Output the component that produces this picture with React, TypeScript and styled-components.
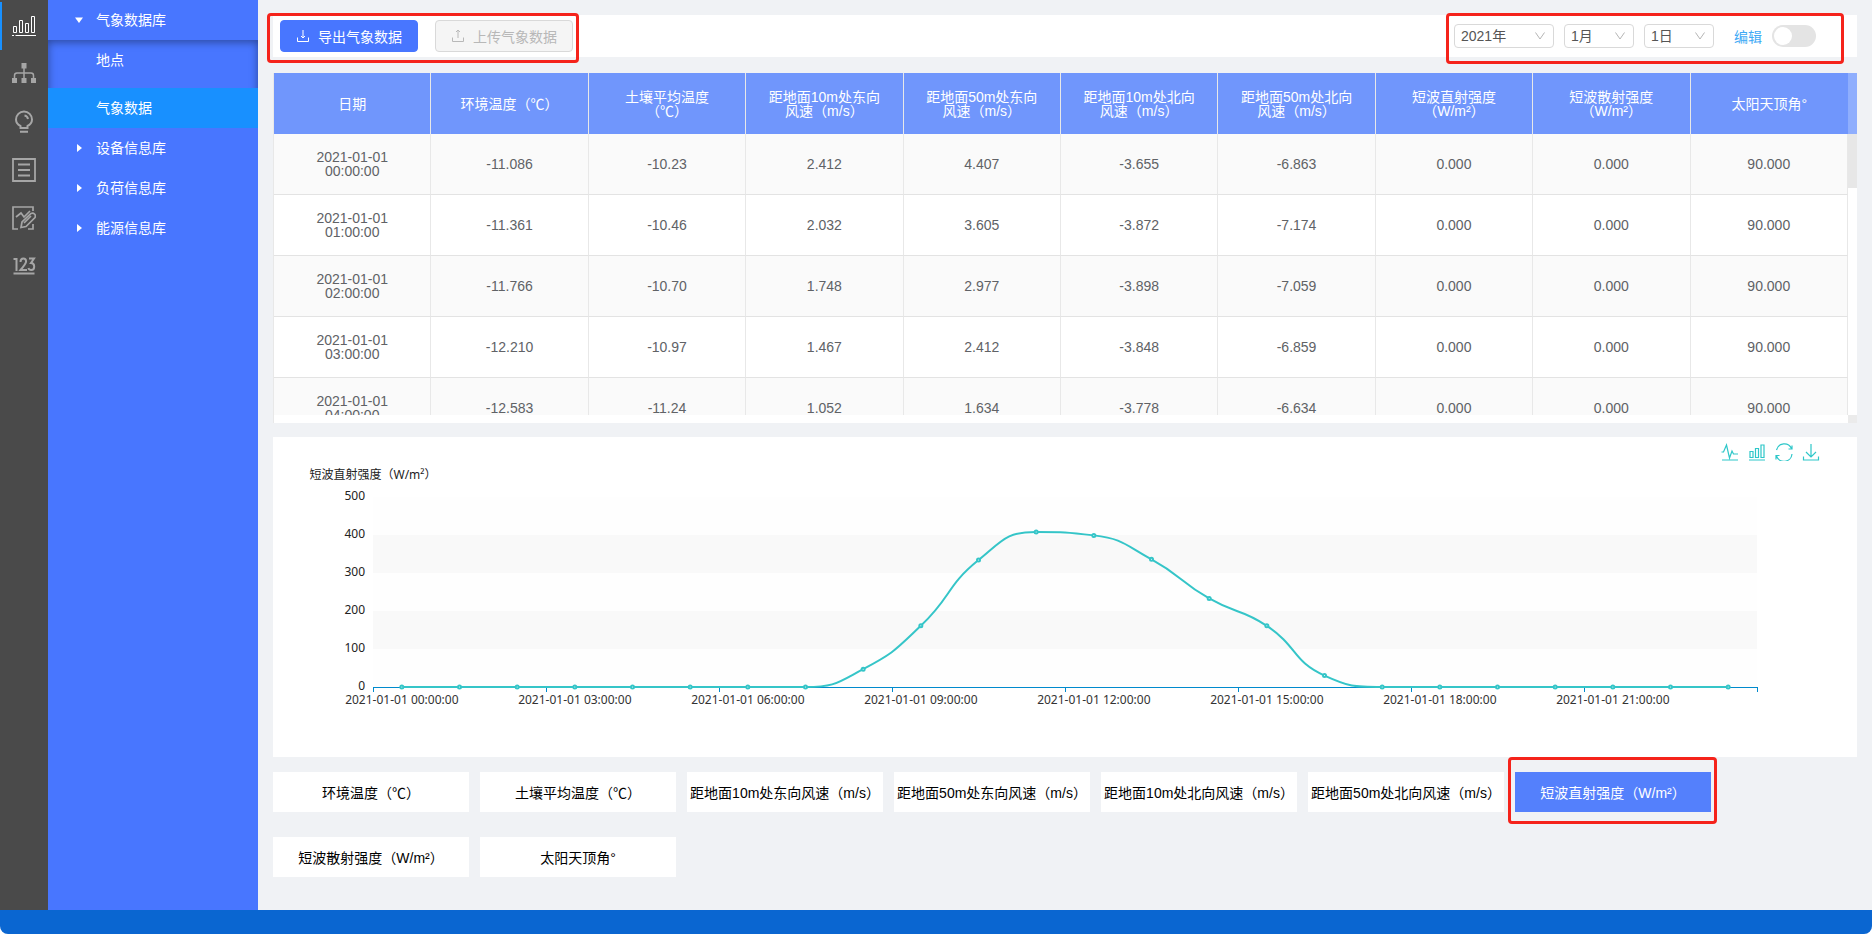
import React, { useLayoutEffect, useRef, useState } from 'react';
import styled, { createGlobalStyle, css } from 'styled-components';

const uiFont = '"Liberation Sans", "Noto Sans CJK SC", sans-serif';
const chartFont = '"Noto Sans", "Noto Sans CJK SC", sans-serif';

const GlobalStyle = createGlobalStyle`
  * { box-sizing: border-box; }
  body { margin: 0; background: #fff; font-family: ${uiFont}; font-size: 14px; }
  button, select, input { font: inherit; }
`;

const Page = styled.div`
  min-height: 100vh;
  display: flex;
  flex-direction: column;
  background: #f0f2f5;
  border-radius: 0 0 8px 8px;
  overflow: hidden;
`;
const Columns = styled.div`
  flex: 1;
  display: flex;
  align-items: stretch;
`;
const Footer = styled.footer`
  height: 24px;
  background: #0a66d1;
`;

const Rail = styled.nav`
  width: 48px;
  flex: none;
  display: flex;
  flex-direction: column;
  background: #4a4a4a;
  padding-top: 2px;
`;
const RailButton = styled.button<{ $active?: boolean }>`
  height: 48px;
  padding: 0 2px 0 0;
  border: 0;
  border-left: 2px solid ${(p) => (p.$active ? '#1890ff' : 'transparent')};
  background: none;
  color: ${(p) => (p.$active ? '#fff' : '#a6a6a6')};
  display: flex;
  align-items: center;
  justify-content: center;
`;

const Sidebar = styled.nav`
  width: 210px;
  flex: none;
  background: #4876ff;
  color: #fff;
`;
const MenuGroup = styled.button`
  width: 100%;
  height: 40px;
  border: 0;
  padding: 0 0 0 27px;
  background: none;
  color: #fff;
  display: flex;
  align-items: center;
  gap: 13px;
  line-height: 20px;
`;
const Submenu = styled.div`
  display: flex;
  flex-direction: column;
  gap: 8px;
  box-shadow: inset 0 2px 8px rgba(0, 0, 0, 0.4);
`;
const MenuLink = styled.a<{ $active?: boolean }>`
  height: 40px;
  padding-left: 48px;
  line-height: 40px;
  color: #fff;
  text-decoration: none;
  background: ${(p) => (p.$active ? '#1890ff' : 'none')};
`;

const Main = styled.main`
  flex: 1;
  min-width: 0;
  padding: 15px;
  display: flex;
  flex-direction: column;
`;
const Panel = styled.section`
  background: #fff;
`;
const Toolbar = styled(Panel)`
  height: 42px;
  margin-bottom: 16px;
  padding: 0 41px 0 7px;
  display: flex;
  align-items: center;
  justify-content: space-between;
`;
const marker = css<{ $mark: string }>`
  position: relative;
  &::after {
    content: '';
    position: absolute;
    inset: ${(p) => p.$mark};
    border: 3px solid #f5231b;
    border-radius: 4px;
    pointer-events: none;
  }
`;
const ActionGroup = styled.div<{ $mark: string }>`
  ${marker}
  display: flex;
  gap: 17px;
`;
const FilterGroup = styled.div<{ $mark: string }>`
  ${marker}
  display: flex;
  align-items: center;
  gap: 10px;
`;
const ActionButton = styled.button`
  height: 32px;
  padding: 0 15px;
  border: 1px solid #4876ff;
  border-radius: 4px;
  background: #4876ff;
  color: #fff;
  display: flex;
  align-items: center;
  gap: 8px;
  white-space: nowrap;
  &:disabled {
    border-color: #d9d9d9;
    background: #f5f5f5;
    color: #b8b8b8;
  }
`;
const SelectBox = styled.div<{ $width: number }>`
  width: ${(p) => p.$width}px;
  height: 24px;
  display: grid;
  align-items: center;
  color: #b5b5b5;
  > * { grid-area: 1 / 1; }
  > svg { justify-self: end; margin-right: 9px; pointer-events: none; }
`;
const Select = styled.select`
  appearance: none;
  width: 100%;
  height: 24px;
  padding: 0 24px 0 6px;
  border: 1px solid #d9d9d9;
  border-radius: 4px;
  background: #fff;
  color: #555;
  line-height: 20px;
`;
const SwitchLabel = styled.label`
  margin-left: 10px;
  color: #40a9f5;
`;
const Switch = styled.input`
  appearance: none;
  width: 44px;
  height: 22px;
  margin: 0;
  padding: 2px;
  border-radius: 11px;
  background: #e4e4e4;
  display: flex;
  &::before {
    content: '';
    width: 18px;
    height: 18px;
    border-radius: 50%;
    background: #fff;
  }
  &:checked { background: #1890ff; justify-content: flex-end; }
`;

const TablePanel = styled(Panel)`
  margin-bottom: 14px;
  border-left: 1px solid #e8e8e8;
  display: grid;
  grid-template-columns: 1fr 9px;
`;
const TableScroll = styled.div`
  height: 342px;
  overflow-y: auto;
  scrollbar-width: none;
`;
const Table = styled.table`
  width: 100%;
  table-layout: fixed;
  border-collapse: separate;
  border-spacing: 0;
  line-height: 14px;
  text-align: center;
`;
const HeadCell = styled.th`
  position: sticky;
  top: 0;
  height: 61px;
  padding: 0 8px;
  border-right: 1px solid #e8e8e8;
  background: #7096fc;
  color: #fff;
  font-weight: 400;
  white-space: nowrap;
  &:last-child { border-right: 0; }
`;
const BodyRow = styled.tr`
  &:nth-child(odd) { background: #fafafa; }
`;
const Cell = styled.td`
  height: 61px;
  padding: 0 40px;
  border-right: 1px solid #e8e8e8;
  border-bottom: 1px solid #e3e3e3;
  color: #606266;
`;
const Gutter = styled.div`
  height: 350px;
  display: flex;
  flex-direction: column;
  background: linear-gradient(#8faefd 61px, #e7e7e7 61px, #e7e7e7 115px, #fff 115px);
  &::after { content: ''; height: 8px; margin-top: auto; background: #ebebeb; }
`;

const ChartPanel = styled(Panel)`
  height: 320px;
  margin-bottom: 15px;
  display: grid;
  > * { grid-area: 1 / 1; }
`;
const ChartBox = styled.div`
  min-width: 0;
  height: 320px;
  overflow: hidden;
  svg { display: block; font-family: ${chartFont}; font-size: 12px; }
`;
const Toolbox = styled.div`
  justify-self: end;
  align-self: start;
  padding: 6px 37px 0 0;
  display: flex;
  gap: 9px;
  z-index: 1;
`;
const ToolButton = styled.button`
  width: 18px;
  height: 18px;
  padding: 0;
  border: 0;
  background: none;
  color: #2ec7c9;
`;

const Metrics = styled.div`
  display: flex;
  flex-wrap: wrap;
  gap: 25px 11px;
`;
const metricBase = css`
  width: 196px;
  height: 40px;
  padding: 0;
  border: 0;
  white-space: nowrap;
`;
const MetricButton = styled.button`
  ${metricBase}
  background: #fff;
  color: #000;
`;
const ActiveMetric = styled.button<{ $mark: string }>`
  ${metricBase}
  ${marker}
  background: #5480fc;
  color: #fff;
`;

const headers: string[][] = [
  ['日期'],
  ['环境温度（℃）'],
  ['土壤平均温度', '（℃）'],
  ['距地面10m处东向', '风速（m/s）'],
  ['距地面50m处东向', '风速（m/s）'],
  ['距地面10m处北向', '风速（m/s）'],
  ['距地面50m处北向', '风速（m/s）'],
  ['短波直射强度', '（W/m²）'],
  ['短波散射强度', '（W/m²）'],
  ['太阳天顶角°'],
];
const rows = [
  ['2021-01-01 00:00:00', '-11.086', '-10.23', '2.412', '4.407', '-3.655', '-6.863', '0.000', '0.000', '90.000'],
  ['2021-01-01 01:00:00', '-11.361', '-10.46', '2.032', '3.605', '-3.872', '-7.174', '0.000', '0.000', '90.000'],
  ['2021-01-01 02:00:00', '-11.766', '-10.70', '1.748', '2.977', '-3.898', '-7.059', '0.000', '0.000', '90.000'],
  ['2021-01-01 03:00:00', '-12.210', '-10.97', '1.467', '2.412', '-3.848', '-6.859', '0.000', '0.000', '90.000'],
  ['2021-01-01 04:00:00', '-12.583', '-11.24', '1.052', '1.634', '-3.778', '-6.634', '0.000', '0.000', '90.000'],
];
const metrics = [
  '环境温度（℃）',
  '土壤平均温度（℃）',
  '距地面10m处东向风速（m/s）',
  '距地面50m处东向风速（m/s）',
  '距地面10m处北向风速（m/s）',
  '距地面50m处北向风速（m/s）',
  '短波直射强度（W/m²）',
  '短波散射强度（W/m²）',
  '太阳天顶角°',
];
const activeMetric = '短波直射强度（W/m²）';
const radiation = [0, 0, 0, 0, 0, 0, 0, 0, 47, 161, 334, 408, 399, 336, 233, 161, 30, 0, 0, 0, 0, 0, 0, 0];

type Point = [number, number];
const clamp = (v: number, a: number, b: number) => Math.max(Math.min(a, b), Math.min(Math.max(a, b), v));

/* Smooth curve whose control points never leave the range of their segment. */
function smoothPath(pts: Point[]): string {
  let d = `M${pts[0][0]},${pts[0][1]}`;
  let out: Point = pts[0];
  for (let i = 1; i < pts.length; i++) {
    const p = pts[i];
    const prev = pts[i - 1];
    const next = pts[i + 1];
    let cin: Point = p;
    let cout: Point = p;
    if (next) {
      const lp = Math.hypot(p[0] - prev[0], p[1] - prev[1]);
      const ln = Math.hypot(next[0] - p[0], next[1] - p[1]);
      const r = ln / (ln + lp);
      const v: Point = [next[0] - prev[0], next[1] - prev[1]];
      cout = [0, 1].map((k) => clamp(p[k] + v[k] * 0.5 * r, p[k], next[k])) as Point;
      cin = [0, 1].map((k) => clamp(p[k] - ((cout[k] - p[k]) * lp) / ln, prev[k], p[k])) as Point;
      cout = [0, 1].map((k) => p[k] + ((p[k] - cin[k]) * ln) / lp) as Point;
    }
    d += `C${out[0]},${out[1]} ${cin[0]},${cin[1]} ${p[0]},${p[1]}`;
    out = cout;
  }
  return d;
}

function RadiationChart() {
  const box = useRef<HTMLDivElement>(null);
  const [width, setWidth] = useState(0);
  useLayoutEffect(() => {
    const el = box.current!;
    const update = () => setWidth(el.clientWidth);
    update();
    const observer = new ResizeObserver(update);
    observer.observe(el);
    return () => observer.disconnect();
  }, []);

  const left = 100;
  const top = 60;
  const band = 38;
  const base = top + band * 5;
  const plot = Math.max(width - 200, 240);
  const step = plot / 24;
  const pts = radiation.map((v, i): Point => [left + step * (i + 0.5), base - (v * band) / 100]);
  const marks = [0, 1, 2, 3, 4, 5, 6, 7];

  return (
    <ChartBox ref={box}>
      <svg width={width} height={320} role="img" aria-label={activeMetric}>
        {[0, 1, 2, 3, 4].map((i) => (
          <rect key={i} x={left} y={top + band * i} width={plot} height={band} fill={i % 2 ? '#f9f9f9' : '#fefefe'} />
        ))}
        <text x={left} y={42} textAnchor="middle" fill="#222">{activeMetric}</text>
        {[0, 100, 200, 300, 400, 500].map((v) => (
          <text key={v} x={left - 8} y={base - (v * band) / 100 + 3} textAnchor="end" fill="#222">{v}</text>
        ))}
        <g stroke="#008acd" shapeRendering="crispEdges">
          <line x1={left} x2={left + plot} y1={base} y2={base} />
          {[...marks, 8].map((i) => (
            <line key={i} x1={left + step * 3 * i} x2={left + step * 3 * i} y1={base} y2={base + 5} />
          ))}
        </g>
        {marks.map((i) => (
          <text key={i} x={pts[i * 3][0]} y={base + 17} textAnchor="middle" fill="#333">
            {`2021-01-01 ${String(i * 3).padStart(2, '0')}:00:00`}
          </text>
        ))}
        <path d={smoothPath(pts)} fill="none" stroke="#35c5c8" strokeWidth={2} />
        {pts.map(([x, y], i) => (
          <circle key={i} cx={x} cy={y} r={1.5} fill="#fff" stroke="#35c5c8" strokeWidth={2} />
        ))}
      </svg>
    </ChartBox>
  );
}

const Icon = ({ size = 24, box = 24, width = 1.5, children }: { size?: number; box?: number; width?: number; children: React.ReactNode }) => (
  <svg width={size} height={size} viewBox={`0 0 ${box} ${box}`} fill="none" stroke="currentColor" strokeWidth={width} aria-hidden="true">
    {children}
  </svg>
);

const Caret = ({ open }: { open?: boolean }) => (
  <svg width="8" height="8" viewBox="0 0 8 8" fill="currentColor" aria-hidden="true">
    <path d={open ? 'M0 1.500h8L4 7z' : 'M2 0v8l5-4z'} />
  </svg>
);
const Chevron = () => (
  <Icon size={10} box={10} width={1}><path d="M0.5 1.5L5 8l4.500-6.500" /></Icon>
);

const railItems = [
  {
    label: '数据库',
    icon: (
      <Icon width={1}>
        <path d="M1.500 12.500h3v6h-3zM7.500 6.500h3v12h-3zM13.500 9.500h3v9h-3zM19.500 2.500h3v16h-3zM0 21.500h2M3.500 21.500H24" />
      </Icon>
    ),
  },
  {
    label: '拓扑',
    icon: (
      <Icon>
        <path d="M12 6v11M2.500 17v-3.500q0-2.500 2.500-2.500h14q2.500 0 2.500 2.500V17" />
        <path fill="currentColor" stroke="none" d="M9.500 1h5v5.500h-5zM0 16h5v5H0zM9.500 16h5v5h-5zM19 16h5v5h-5z" />
      </Icon>
    ),
  },
  {
    label: '方案',
    icon: (
      <Icon width={2}>
        <path d="M8.500 18v-2C5.500 14.500 4 12.500 4 9.500a8 8 0 0 1 16 0c0 3-1.500 5-4.500 6.500v2zM8 21.800h8M12.500 5.500q3 .5 3.500 3.500" />
      </Icon>
    ),
  },
  {
    label: '列表',
    icon: (
      <Icon width={1.8}>
        <path d="M1 1h22v22H1zM6 6.500h12M6 12h12M6 17.500h12" />
      </Icon>
    ),
  },
  {
    label: '分析',
    icon: (
      <Icon width={1.7}>
        <path d="M21 5V1H1v22h5M4 11l5-4 3 4 6-6M9 21.500l1-5.500 9-8.500q2-1 3.500.5t.5 3.500L14 20.500zM12 17l7-7M16 23h5v-5" />
      </Icon>
    ),
  },
  {
    label: '数值',
    icon: (
      <Icon width={2}>
        <path d="M1.500 5H4.500v12M8.500 8q0-3.500 2.800-3.500t2.800 3q0 2-5.600 8.500h6.500M17 4.500h5l-3 4.500q3.200 0 3.200 3.500t-3 3.500q-2.200 0-2.800-2M1.500 19.500h21" />
      </Icon>
    ),
  },
];

const toolItems = [
  { label: '折线图', d: 'M0.500 9h2l3-7 3 13 2.500-7 1.500 3H17M1 17h16' },
  { label: '柱状图', d: 'M2 8.500h3v6H2zM7.500 5.500h3v9h-3zM13 2h3v12.500h-3zM1 17h16' },
  { label: '还原', d: 'M1.500 7A8 8 0 0 1 16.500 5.500M17 2.500v3.500h-3.500M17 11A8 8 0 0 1 1.500 13M1 16.500v-4h3.500' },
  { label: '下载', d: 'M9 1v13M4 9l5 5 5-5M1.500 13.500V17h15v-3.500' },
];

export default function App() {
  return (
    <Page>
      <GlobalStyle />
      <Columns>
        <Rail>
          {railItems.map((item, i) => (
            <RailButton key={item.label} $active={i === 0} aria-label={item.label}>{item.icon}</RailButton>
          ))}
        </Rail>
        <Sidebar>
          <MenuGroup aria-expanded="true"><Caret open />气象数据库</MenuGroup>
          <Submenu>
            <MenuLink href="#place">地点</MenuLink>
            <MenuLink href="#weather" $active>气象数据</MenuLink>
          </Submenu>
          <MenuGroup aria-expanded="false"><Caret />设备信息库</MenuGroup>
          <MenuGroup aria-expanded="false"><Caret />负荷信息库</MenuGroup>
          <MenuGroup aria-expanded="false"><Caret />能源信息库</MenuGroup>
        </Sidebar>
        <Main>
          <Toolbar>
            <ActionGroup $mark="-7px -6px -11px -13px">
              <ActionButton>
                <Icon size={14} box={14} width={1}><path d="M7 1v8M5 7l2 2 2-2M1.500 8.500v4h11v-4" /></Icon>
                导出气象数据
              </ActionButton>
              <ActionButton disabled>
                <Icon size={14} box={14} width={1}><path d="M7 9V1M5 3l2-2 2 2M1.500 8.500v4h11v-4" /></Icon>
                上传气象数据
              </ActionButton>
            </ActionGroup>
            <FilterGroup $mark="-11px -28px -16px -8px">
              <SelectBox $width={100}>
                <Select aria-label="年"><option>2021年</option></Select>
                <Chevron />
              </SelectBox>
              <SelectBox $width={70}>
                <Select aria-label="月"><option>1月</option></Select>
                <Chevron />
              </SelectBox>
              <SelectBox $width={70}>
                <Select aria-label="日"><option>1日</option></Select>
                <Chevron />
              </SelectBox>
              <SwitchLabel htmlFor="edit">编辑</SwitchLabel>
              <Switch id="edit" type="checkbox" role="switch" />
            </FilterGroup>
          </Toolbar>

          <TablePanel>
            <TableScroll>
              <Table>
                <thead>
                  <tr>
                    {headers.map((lines, i) => (
                      <HeadCell key={i} scope="col">
                        {lines[0]}
                        {lines[1] && <><br />{lines[1]}</>}
                      </HeadCell>
                    ))}
                  </tr>
                </thead>
                <tbody>
                  {rows.map((row) => (
                    <BodyRow key={row[0]}>
                      {row.map((value, i) => <Cell key={i}>{value}</Cell>)}
                    </BodyRow>
                  ))}
                </tbody>
              </Table>
            </TableScroll>
            <Gutter />
          </TablePanel>

          <ChartPanel>
            <RadiationChart />
            <Toolbox>
              {toolItems.map((t) => (
                <ToolButton key={t.label} aria-label={t.label}>
                  <Icon size={18} box={18} width={1.2}><path d={t.d} /></Icon>
                </ToolButton>
              ))}
            </Toolbox>
          </ChartPanel>

          <Metrics>
            {metrics.map((m) =>
              m === activeMetric ? (
                <ActiveMetric key={m} $mark="-15px -6px -12px -7px" aria-pressed="true">{m}</ActiveMetric>
              ) : (
                <MetricButton key={m}>{m}</MetricButton>
              ),
            )}
          </Metrics>
        </Main>
      </Columns>
      <Footer />
    </Page>
  );
}
